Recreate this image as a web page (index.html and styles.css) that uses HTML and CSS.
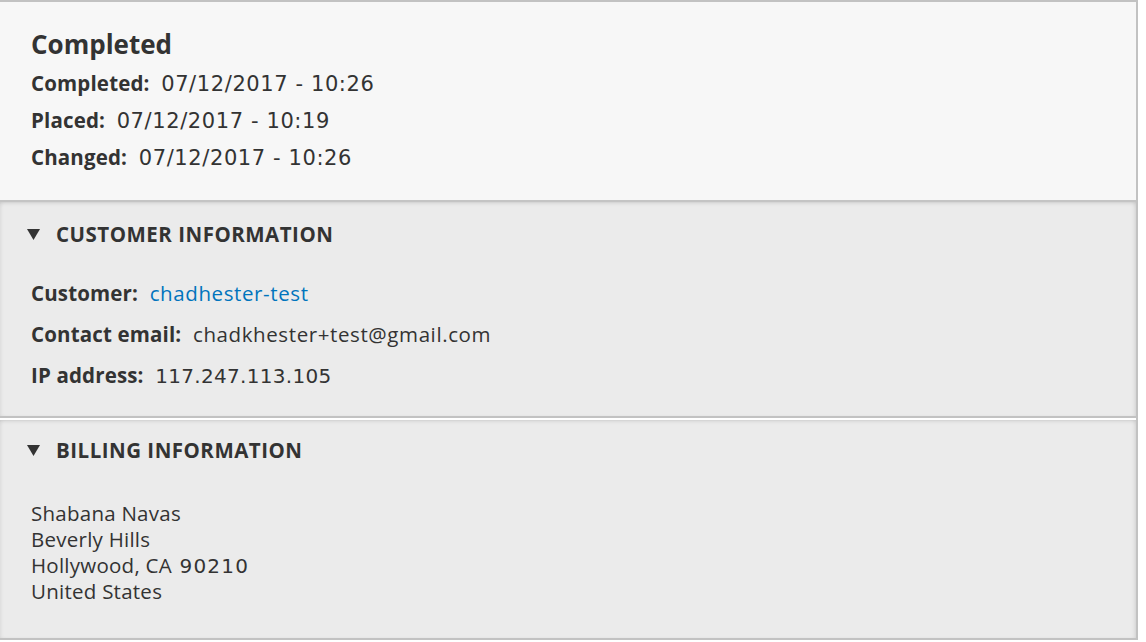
FILE: index.html
```html
<!DOCTYPE html>
<html lang="en">
<head>
<meta charset="utf-8">
<title>Order</title>
<link rel="stylesheet" href="styles.css">
</head>
<body>
<div class="meta">
  <div class="meta-header">
    <h3 class="meta-title">Completed</h3>
    <div class="row"><span class="label">Completed:</span><span class="value num date">07/12/2017 - 10:26</span></div>
    <div class="row"><span class="label">Placed:</span><span class="value num date">07/12/2017 - 10:19</span></div>
    <div class="row"><span class="label">Changed:</span><span class="value num date">07/12/2017 - 10:26</span></div>
  </div>
  <details class="panel panel-customer" open>
    <summary><svg class="tri" width="13" height="11" viewBox="0 0 13 11"><polygon points="0,0 13,0 6.5,11" fill="#333"/></svg><span>CUSTOMER INFORMATION</span></summary>
    <div class="panel-body">
      <div class="row"><span class="label">Customer:</span><a class="value link" href="#">chadhester-test</a></div>
      <div class="row"><span class="label">Contact email:</span><span class="value">chadkhester+test@gmail.com</span></div>
      <div class="row"><span class="label">IP address:</span><span class="value num ip">117.247.113.105</span></div>
    </div>
  </details>
  <details class="panel panel-billing" open>
    <summary><svg class="tri" width="13" height="11" viewBox="0 0 13 11"><polygon points="0,0 13,0 6.5,11" fill="#333"/></svg><span>BILLING INFORMATION</span></summary>
    <div class="panel-body address">
      <div>Shabana Navas</div>
      <div>Beverly Hills</div>
      <div>Hollywood, CA <span class="num zip">90210</span></div>
      <div>United States</div>
    </div>
  </details>
</div>
</body>
</html>
```

FILE: styles.css
```css
html, body {
  margin: 0;
  padding: 0;
  background: #ffffff;
}
body {
  font-family: "Open Sans", "Noto Sans", sans-serif;
  color: #333333;
  font-size: 20.5px;
}
.meta {
  width: 1136px;
  border-top: 2px solid #c2c2c2;
  border-right: 2px solid #c2c2c2;
  border-bottom: 2px solid #c2c2c2;
  background: #ebebeb;
}
.meta-header {
  background: #f7f7f7;
  padding: 24px 0 24px 31px;
  border-bottom: 2px solid #c4c4c4;
}
.meta-title {
  margin: 0 0 2px 0;
  font-size: 26px;
  line-height: 37px;
  font-weight: 700;
}
.row {
  line-height: 37px;
}
.label {
  font-weight: 700;
  letter-spacing: 0.15px;
  margin-right: 0.3em;
}
.label::after {
  content: " ";
}
.value {
  letter-spacing: 0.6px;
}
.num {
  font-family: "DejaVu Sans", "Open Sans", sans-serif;
  font-size: 20px;
  line-height: 1;
  letter-spacing: 0.3px;
}
.date {
  font-size: 21px;
  letter-spacing: 0.6px;
}
.zip {
  letter-spacing: 1.2px;
  margin-left: 2px;
}
.link {
  color: #0074bd;
  text-decoration: none;
}
.panel {
  background: #ebebeb;
  box-shadow: inset 0 3px 4px -2px rgba(0, 0, 0, 0.12), inset -3px 0 4px -2px rgba(0, 0, 0, 0.1), inset 3px 0 4px -2px rgba(0, 0, 0, 0.06);
}
.panel-customer {
  border-bottom: 2px solid #c2c2c2;
}
.panel-billing {
  border-top: 2px solid #ffffff;
}
summary {
  list-style: none;
  display: flex;
  align-items: center;
  gap: 16px;
  padding: 19px 0 0 27px;
  font-weight: 700;
  line-height: 26px;
  letter-spacing: 0.5px;
  cursor: pointer;
}
summary::-webkit-details-marker {
  display: none;
}
.tri {
  display: block;
  flex: none;
}
.panel-body {
  padding: 26px 0 20px 31px;
}
.panel-body .row {
  line-height: 41px;
}
.panel-billing summary {
  padding-top: 17px;
}
.address {
  padding-top: 37px;
  padding-bottom: 34px;
  line-height: 26px;
  letter-spacing: 0.25px;
}
```
